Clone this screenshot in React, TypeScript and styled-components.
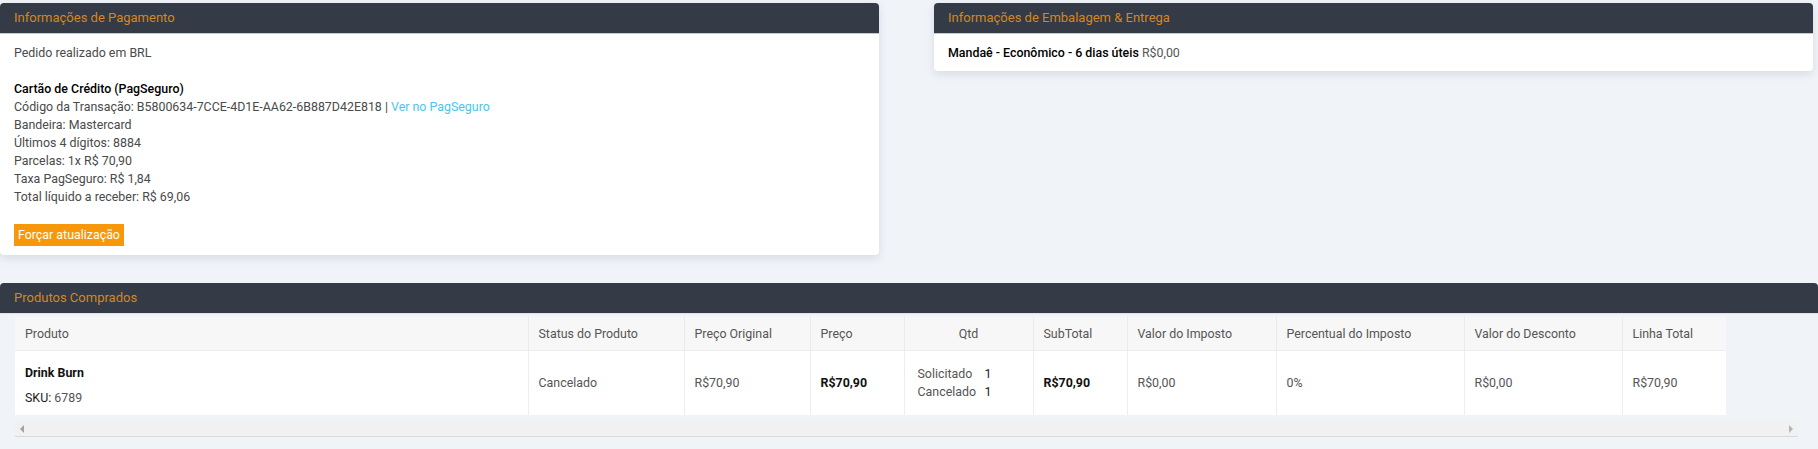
import React from "react";
import styled, { createGlobalStyle } from "styled-components";

const GlobalStyle = createGlobalStyle`
  html, body {
    margin: 0;
    padding: 0;
    background: #f0f3f8;
  }
  body {
    font-family: Roboto, "Liberation Sans", Arial, sans-serif;
    font-size: 12.4px;
    color: #4a4a4a;
  }
  * { box-sizing: border-box; }
`;

const Page = styled.div`
  padding-top: 3px;
  width: 1818px;
`;

const TopRow = styled.div`
  display: flex;
  align-items: flex-start;
  gap: 55px;
  width: 1813px;
`;

const Card = styled.section`
  flex: 1 1 0;
  background: #ffffff;
  border-radius: 4px;
  box-shadow: 0 3px 8px rgba(40, 50, 70, 0.12);
`;

const CardHeader = styled.header`
  height: 31px;
  background: #343a46;
  border-radius: 4px 4px 0 0;
  border-bottom: 1px solid #c4c8cf;
  padding: 0 14px;
  line-height: 30px;
  color: #d6861d;
  font-size: 13px;
`;

const CardBody = styled.div`
  padding: 10px 14px 9px;
  line-height: 18px;
`;

const Para = styled.div<{ $gap?: number }>`
  margin-bottom: ${(p) => p.$gap ?? 0}px;
`;

const Strong = styled.span`
  color: #000;
  font-weight: 500;
`;

const Muted = styled.span`
  color: #555;
`;

const Link = styled.a`
  color: #4cc6ee;
  text-decoration: none;
`;

const Button = styled.button`
  display: block;
  height: 22px;
  padding: 0 4px;
  border: none;
  border-radius: 0;
  background: #f7980b;
  color: #ffffff;
  font-family: inherit;
  font-size: 12.4px;
  line-height: 22px;
  cursor: pointer;
`;

const Products = styled.section`
  margin-top: 28px;
`;

const ProductsHeader = styled(CardHeader)`
  width: 1818px;
  border-bottom: 1px solid #dfe2e7;
`;

const TableWrap = styled.div`
  margin: 3px 20px 0 15px;
`;

const Table = styled.table`
  width: 1711px;
  border-collapse: collapse;
  table-layout: fixed;
  background: #ffffff;
`;

const Th = styled.th<{ $center?: boolean }>`
  height: 33px;
  padding: 0 10px;
  background: #f7f7f7;
  color: #555;
  font-weight: 400;
  text-align: ${(p) => (p.$center ? "center" : "left")};
  border-right: 1px solid #ebebeb;
  border-bottom: 1px solid #ececec;
  white-space: nowrap;
  &:last-child { border-right: none; }
`;

const Td = styled.td<{ $bold?: boolean; $shift?: number; $pl?: number }>`
  height: 65px;
  padding: ${(p) => p.$shift ?? 0}px 10px 0 ${(p) => p.$pl ?? 10}px;
  vertical-align: middle;
  color: ${(p) => (p.$bold ? "#111" : "#555")};
  font-weight: ${(p) => (p.$bold ? 700 : 400)};
  border-right: 1px solid #eeeeee;
  line-height: 18px;
  white-space: nowrap;
  &:last-child { border-right: none; }
`;

const ProductName = styled.div`
  color: #111;
  font-weight: 700;
  margin-bottom: 7px;
`;

const Sku = styled.div`
  color: #555;
`;

const SkuLabel = styled.span`
  color: #1a1a1a;
`;

const QtyGrid = styled.div`
  display: grid;
  grid-template-columns: 67px auto;
`;

const QtyValue = styled.span`
  color: #222;
`;

const ScrollBar = styled.div`
  margin-top: 6px;
  height: 16px;
  background: #f1f1f1;
  border-bottom: 1px solid #d6d9de;
  display: flex;
  align-items: center;
  justify-content: space-between;
  padding: 0 5px 0 5px;
`;

const Arrow = styled.span<{ $dir: "left" | "right" }>`
  width: 0;
  height: 0;
  border-top: 4px solid transparent;
  border-bottom: 4px solid transparent;
  ${(p) =>
    p.$dir === "left"
      ? "border-right: 4px solid #a3a3a3;"
      : "border-left: 4px solid #b5b5b5;"}
`;

const cols = [513, 156, 126, 94, 129, 94, 149, 188, 158, 104];

export default function App() {
  return (
    <Page>
      <GlobalStyle />
      <TopRow>
        <Card>
          <CardHeader>Informações de Pagamento</CardHeader>
          <CardBody>
            <Para $gap={18}>Pedido realizado em BRL</Para>
            <Para $gap={18}>
              <Strong>Cartão de Crédito (PagSeguro)</Strong>
              <br />
              Código da Transação: B5800634-7CCE-4D1E-AA62-6B887D42E818 |{" "}
              <Link href="#">Ver no PagSeguro</Link>
              <br />
              Bandeira: Mastercard
              <br />
              Últimos 4 dígitos: 8884
              <br />
              Parcelas: 1x R$ 70,90
              <br />
              Taxa PagSeguro: R$ 1,84
              <br />
              Total líquido a receber: R$ 69,06
            </Para>
            <Button>Forçar atualização</Button>
          </CardBody>
        </Card>
        <Card>
          <CardHeader>Informações de Embalagem &amp; Entrega</CardHeader>
          <CardBody>
            <Strong>Mandaê - Econômico - 6 dias úteis</Strong>{" "}
            <Muted>R$0,00</Muted>
          </CardBody>
        </Card>
      </TopRow>

      <Products>
        <ProductsHeader>Produtos Comprados</ProductsHeader>
        <TableWrap>
          <Table>
            <colgroup>
              {cols.map((w, i) => (
                <col key={i} style={{ width: w }} />
              ))}
            </colgroup>
            <thead>
              <tr>
                <Th>Produto</Th>
                <Th>Status do Produto</Th>
                <Th>Preço Original</Th>
                <Th>Preço</Th>
                <Th $center>Qtd</Th>
                <Th>SubTotal</Th>
                <Th>Valor do Imposto</Th>
                <Th>Percentual do Imposto</Th>
                <Th>Valor do Desconto</Th>
                <Th>Linha Total</Th>
              </tr>
            </thead>
            <tbody>
              <tr>
                <Td $shift={6}>
                  <ProductName>Drink Burn</ProductName>
                  <Sku>
                    <SkuLabel>SKU:</SkuLabel> 6789
                  </Sku>
                </Td>
                <Td>Cancelado</Td>
                <Td>R$70,90</Td>
                <Td $bold>R$70,90</Td>
                <Td $pl={13}>
                  <QtyGrid>
                    <span>Solicitado</span>
                    <QtyValue>1</QtyValue>
                    <span>Cancelado</span>
                    <QtyValue>1</QtyValue>
                  </QtyGrid>
                </Td>
                <Td $bold>R$70,90</Td>
                <Td>R$0,00</Td>
                <Td>0%</Td>
                <Td>R$0,00</Td>
                <Td>R$70,90</Td>
              </tr>
            </tbody>
          </Table>
          <ScrollBar>
            <Arrow $dir="left" />
            <Arrow $dir="right" />
          </ScrollBar>
        </TableWrap>
      </Products>
    </Page>
  );
}
